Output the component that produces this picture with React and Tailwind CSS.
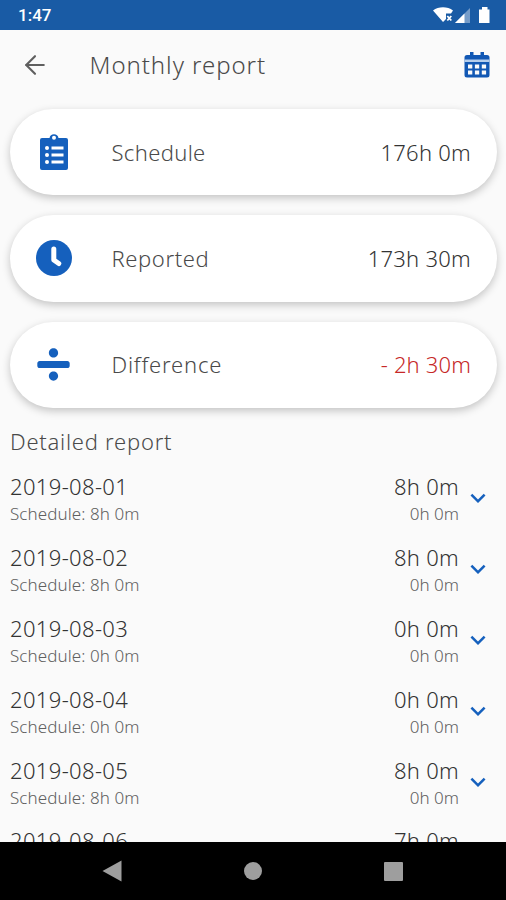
import { ArrowLeft } from "lucide-react";
import { FaDivide } from "react-icons/fa";
import { MdKeyboardArrowDown } from "react-icons/md";

const summary = [
  { label: "Schedule", value: "176h 0m", icon: ClipboardIcon, labelClass: "tracking-[0.35px]", valueClass: "text-[#333] tracking-[0.25px]" },
  { label: "Reported", value: "173h 30m", icon: ClockIcon, labelClass: "tracking-[0.6px]", valueClass: "text-[#333] tracking-[0.25px]" },
  { label: "Difference", value: "- 2h 30m", icon: FaDivide, labelClass: "tracking-[0.8px]", valueClass: "text-[#c62828] tracking-[0.15px]" }
];

const days = [
  { date: "2019-08-01", reported: "8h 0m", schedule: "8h 0m", diff: "0h 0m" },
  { date: "2019-08-02", reported: "8h 0m", schedule: "8h 0m", diff: "0h 0m" },
  { date: "2019-08-03", reported: "0h 0m", schedule: "0h 0m", diff: "0h 0m" },
  { date: "2019-08-04", reported: "0h 0m", schedule: "0h 0m", diff: "0h 0m" },
  { date: "2019-08-05", reported: "8h 0m", schedule: "8h 0m", diff: "0h 0m" },
  { date: "2019-08-06", reported: "7h 0m" }
];

function CalendarIcon() {
  return (
    <svg width="26" height="26" viewBox="0 0 26 26">
      <path d="M3 3h20a2.500 2.500 0 0 1 2.500 2.500V23a2.500 2.500 0 0 1-2.500 2.500H3A2.500 2.500 0 0 1 .5 23V5.500A2.500 2.500 0 0 1 3 3z" fill="#1258b4" />
      <path d="M6 0h3.500V4H6zM16.500 0H20V4h-3.500z" fill="#1258b4" />
      <path d="M.5 7.500h25v2.500H.5z" fill="#b4cdec" />
      <path
        d="M4 12.500h4.300v4H4zm6.900 0h4.300v4h-4.300zm6.900 0h4.300v4h-4.300zM4 18.500h4.300v4H4zm6.900 0h4.300v4h-4.300zm6.900 0h4.300v4h-4.300z"
        fill="#fafafa"
      />
    </svg>
  );
}

function ClipboardIcon() {
  return (
    <svg width="28" height="38" viewBox="0 0 28 38">
      <path d="M2 5h7.500a4.600 4.600 0 0 1 9 0H26a2 2 0 0 1 2 2V35a2 2 0 0 1-2 2H2a2 2 0 0 1-2-2V7a2 2 0 0 1 2-2z" fill="#1560bd" />
      <circle cx="14" cy="4.800" r="2" fill="#fff" />
      <path d="M11.500 13.500h12v3h-12zm0 7h12v3h-12zm0 7h12v3h-12z" fill="#fff" />
      <circle cx="7" cy="15" r="2" fill="#fff" />
      <circle cx="7" cy="22" r="2" fill="#fff" />
      <circle cx="7" cy="29" r="2" fill="#fff" />
    </svg>
  );
}

function ClockIcon() {
  return (
    <svg width="36" height="36" viewBox="0 0 36 36">
      <circle cx="18" cy="18" r="18" fill="#1560bd" />
      <path d="M17.800 9v11l5 3.500" fill="none" stroke="#fff" strokeWidth="5" strokeLinecap="round" strokeLinejoin="round" />
    </svg>
  );
}

function StatusBar() {
  return (
    <div className="flex h-[30px] shrink-0 items-center justify-between bg-[#195ba5] pr-[15px] pl-[18px]">
      <span className="font-['Roboto',sans-serif] text-[17px] font-medium leading-[30px] text-white">1:47</span>
      <svg width="58" height="18" viewBox="0 0 58 18" fill="#fff">
        <path d="M0 4.500C5.500.3 14.500.3 20 4.500L18 7.500H13V13l-3 3z" />
        <path d="M14.300 10l4 4.500m0-4.500l-4 4.500" stroke="#fff" strokeWidth="1.800" />
        <path d="M22 17L37 2v15z" opacity=".4" />
        <path d="M22 17l9.500-9.500V17z" />
        <path d="M47 3.500h2V1h5.500v2.500h2V17H46V3.500z" />
      </svg>
    </div>
  );
}

function SummaryCard({ item }) {
  const Icon = item.icon;
  return (
    <div className="flex h-[86.300px] items-center rounded-[44px] bg-white pr-[26px] pl-[25px] shadow-[0_3px_8px_rgba(0,0,0,0.22)]">
      <div className="flex w-[37px] justify-center">
        <Icon size={37} color="#1560bd" />
      </div>
      <span className={`ml-[39.500px] flex-1 text-[22px] text-[#4a4a4a] ${item.labelClass}`}>{item.label}</span>
      <span className={`text-[22px] ${item.valueClass}`}>{item.value}</span>
    </div>
  );
}

function DayRow({ day }) {
  return (
    <div className="flex h-[70.800px] shrink-0 items-start">
      <div className="flex-1">
        <p className="text-[22px] leading-7 tracking-[0.35px] text-[#333]">{day.date}</p>
        {day.schedule ? <p className="text-[17px] leading-7 tracking-[0.08px] text-[#606060]">Schedule: {day.schedule}</p> : null}
      </div>
      <div className="text-right">
        <p className="text-[22px] leading-7 tracking-[0.3px] text-[#333]">{day.reported}</p>
        {day.diff ? <p className="text-[17px] leading-7 text-[#606060]">{day.diff}</p> : null}
      </div>
      <MdKeyboardArrowDown size={30} color="#1560bd" className="mt-[11px] ml-[4px]" />
    </div>
  );
}

export default function App() {
  return (
    <div className="flex h-[900px] w-[506px] flex-col overflow-hidden bg-[#fafafa] font-['Noto_Sans',sans-serif] font-light">
      <StatusBar />

      <header className="flex h-[70px] shrink-0 items-center pr-4 pl-[20px]">
        <ArrowLeft size={30} strokeWidth={1.7} color="#5f5f5f" />
        <h1 className="ml-[39.500px] flex-1 text-[24px] tracking-[0.95px] text-[#4a4a4a]">Monthly report</h1>
        <CalendarIcon />
      </header>

      <main className="flex min-h-0 flex-1 flex-col overflow-hidden pt-[9px]">
        <div className="flex shrink-0 flex-col gap-5 pr-[9px] pl-2.5">
          {summary.map((item) => (
            <SummaryCard key={item.label} item={item} />
          ))}
        </div>
        <h2 className="mt-[19px] shrink-0 pl-2.5 text-[22px] leading-7 tracking-[0.75px] text-[#4a4a4a]">Detailed report</h2>
        <div className="mt-[17.500px] flex flex-col pr-[13px] pl-2.5">
          {days.map((day) => (
            <DayRow key={day.date} day={day} />
          ))}
        </div>
      </main>

      <nav className="flex h-[58px] shrink-0 items-center justify-between bg-black pr-[103px] pl-[102px]">
        <svg width="20" height="22" viewBox="0 0 20 22" fill="#9e9e9e">
          <path d="M.5 11L19.500 .5v21z" />
        </svg>
        <div className="size-[18px] rounded-full bg-[#9e9e9e]" />
        <div className="size-[19px] rounded-[1px] bg-[#9e9e9e]" />
      </nav>
    </div>
  );
}
